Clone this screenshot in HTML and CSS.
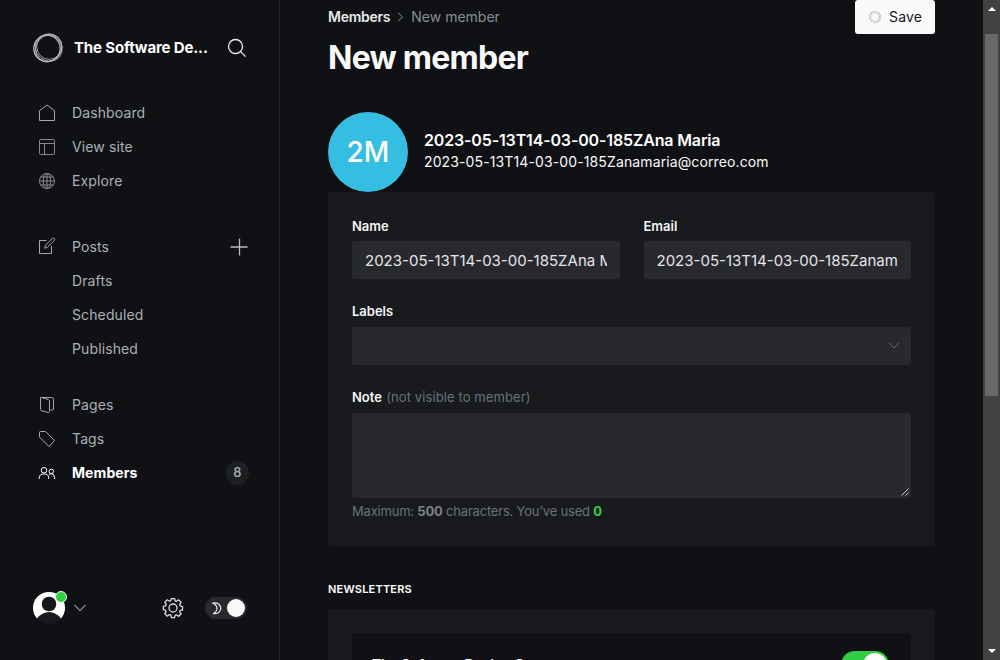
FILE: index.html
```html
<!DOCTYPE html>
<html lang="en">
<head>
<meta charset="utf-8">
<title>New member</title>
<link rel="stylesheet" href="styles.css">
</head>
<body>
<div class="app">
  <aside class="sidebar">
    <header class="site">
      <svg class="logo" width="32" height="32" viewBox="0 0 32 32"><ellipse cx="15" cy="16.500" rx="13.200" ry="13.300" stroke-width="1.300"/><ellipse cx="16.300" cy="16.600" rx="14" ry="12.600" transform="rotate(-50 16 16)" stroke-width=".9"/><ellipse cx="16.500" cy="15.500" rx="14" ry="12.800" transform="rotate(40 16 16)" stroke-width=".8"/><ellipse cx="17.300" cy="14.500" rx="12.600" ry="12.800" stroke-width=".8"/></svg>
      <span class="site-name">The Software De...</span>
      <svg class="search" width="20" height="20" viewBox="0 0 20 20"><circle cx="8.5" cy="8.5" r="7"/><path d="M13.6 13.6l5 5"/></svg>
    </header>
    <nav class="nav">
      <ul class="group">
        <li><svg class="ico" viewBox="0 0 18 18"><path d="M1.5 6.7L9 1l7.5 5.7v9.8h-15z"/></svg><span>Dashboard</span></li>
        <li><svg class="ico dim" viewBox="0 0 18 18"><rect x="1.5" y="1.5" width="15" height="15" rx="1"/><path d="M1.5 5.5h15M6.5 5.5v11"/></svg><span>View site</span></li>
        <li><svg class="ico dim" viewBox="0 0 18 18"><circle cx="9" cy="9" r="7.5"/><ellipse cx="9" cy="9" rx="3.7" ry="7.5"/><path d="M9 1.5v15M1.5 9h15M2.7 5h12.6M2.7 13h12.6"/></svg><span>Explore</span></li>
      </ul>
      <ul class="group posts">
        <li><svg class="ico up1" viewBox="0 0 18 18"><path d="M8.5 3.5h-7v13h12V9M6.7 11.2l.8-3 6.8-6.7q1-1 2 0t0 2L9.5 10.300z"/></svg><span>Posts</span><svg class="plus" width="18" height="18" viewBox="0 0 18 18"><path d="M9.500.5v17M.5 9h17"/></svg></li>
        <li class="sub"><span>Drafts</span></li>
        <li class="sub"><span>Scheduled</span></li>
        <li class="sub"><span>Published</span></li>
      </ul>
      <ul class="group">
        <li><svg class="ico" viewBox="0 0 18 18"><path d="M2.500 1.500h11q2 0 2 2v9.500q0 1-1 1h-2M2.500 1.500v12q0 1 1 1.200l6.700 1.800q1.300.2 1.300-1V5q0-1-1-1.300l-7-2.200"/></svg><span>Pages</span></li>
        <li><svg class="ico" viewBox="0 0 18 18"><path d="M1.500 2.500q0-1 1-1H7.500L16.500 10.500 11 16.500 1.500 7z"/></svg><span>Tags</span></li>
        <li class="active"><svg class="ico" viewBox="0 0 18 18"><circle cx="6" cy="6.300" r="2.800"/><circle cx="13.300" cy="7.400" r="2.200"/><path d="M1.300 15v-1.300Q1.500 10 6 9.900T10.700 13.700V15M11 10.600q1-.9 2.300-.9 3 0 3.400 4V15"/></svg><span>Members</span><span class="count">8</span></li>
      </ul>
    </nav>
    <footer class="foot">
      <div class="user">
        <svg width="32" height="34" viewBox="0 0 32 34"><circle cx="16" cy="17" r="16" fill="#191a1d"/><path d="M4 27.500A16 16 0 1 1 28 27.500Q23 21 16 21T4 27.500z" fill="#fff"/><circle cx="16" cy="13" r="7.300" fill="#15161a"/></svg>
        <span class="online"></span>
      </div>
      <svg class="down" width="12" height="8" viewBox="0 0 12 8"><path d="M.7 1L6 6.700 11.300 1"/></svg>
      <svg class="gear" width="22" height="22" viewBox="0 0 22 22"><circle cx="11" cy="11" r="4"/><path d="M9.400 1.600h3.200l.5 2.300q1.200.7 2.300-.1l1.200-.9 2.500 2.500-1.300 1.900q-.2 1.300 1 1.900l1.700.5v3.200l-2 .4q-1.200.8-.6 2l1.200 1.500-2.400 2.500-1.900-1.300q-1.300-.2-1.900 1l-.3 1.700H9.400L9 18.400q-.9-1.100-2.100-.5l-1.700 1.300-2.400-2.400L4.100 15q.2-1.300-1-1.900l-1.700-.4V9.400L3.500 9q1.100-.8.500-2.100L2.800 5.200l2.400-2.400L7.100 4q1.300.2 1.900-.9z"/></svg>
      <div class="theme"><svg width="10" height="13" viewBox="0 0 10 13"><path d="M1 1.200Q4.200.3 6.800 2.200 9 4.200 8.700 7 8 12 1 11.700 5 9.800 5 6.400T1 1.200z"/></svg><i></i></div>
    </footer>
  </aside>
  <main class="main">
    <header class="head">
      <div>
        <div class="crumbs"><b>Members</b><svg width="7" height="10" viewBox="0 0 7 10"><path d="M1 .8L5.500 5 1 9.200"/></svg><span>New member</span></div>
        <h1>New member</h1>
      </div>
      <button class="save"><svg width="14" height="14" viewBox="0 0 14 14"><circle cx="7" cy="7" r="5"/></svg>Save</button>
    </header>
    <section class="profile">
      <div class="avatar">2M</div>
      <div class="who"><h3>2023-05-13T14-03-00-185ZAna Maria</h3><p>2023-05-13T14-03-00-185Zanamaria@correo.com</p></div>
    </section>
    <section class="panel">
      <div class="cols">
        <div><label>Name</label><div class="input"><span>2023-05-13T14-03-00-185ZAna Maria</span></div></div>
        <div><label>Email</label><div class="input"><span>2023-05-13T14-03-00-185Zanamaria@correo.com</span></div></div>
      </div>
      <label class="l2">Labels</label>
      <div class="input select"><svg width="12" height="8" viewBox="0 0 12 8"><path d="M1 1l5 5 5-5"/></svg></div>
      <label class="l3">Note <span>(not visible to member)</span></label>
      <div class="area"><svg width="8" height="8" viewBox="0 0 8 8"><path d="M.5 7.500l7-7M4.500 7.500l3-3"/></svg></div>
      <p class="hint">Maximum: <b>500</b> characters. You’ve used <b class="ok">0</b></p>
    </section>
    <h4>NEWSLETTERS</h4>
    <section class="panel news"><div class="row"><span class="row-name">The Software Design Co</span><div class="switch"><i></i></div></div></section>
  </main>
  <div class="scroll"><span class="up"></span><div class="thumb"></div><span class="dn"></span></div>
</div>
</body>
</html>
```
FILE: styles.css
```css
* { box-sizing: border-box; }
body { margin: 0; background: #101114; color: #fafafa; font-family: Inter, "Open Sans", sans-serif; }
ul, p, h1, h3, h4 { margin: 0; padding: 0; list-style: none; }
svg { display: block; flex: none; fill: none; stroke: #a4a8ad; stroke-width: 1; }
.app { display: flex; height: 660px; overflow: hidden; }
.sidebar { width: 280px; flex: none; border-right: 1px solid #25262a; display: flex; flex-direction: column; padding: 32px 30px 34px 32px; }
.site { display: flex; align-items: center; height: 32px; }
.logo { stroke: #bdbdbd; }
.site-name { font-size: 15px; font-weight: 700; margin-left: 10px; width: 135px; padding-bottom: 2px; white-space: nowrap; color: #fff; letter-spacing: -.15px; }
.search { margin-left: 18px; stroke: #eee; stroke-width: 1.3; }
.nav { margin-top: 32px; }
.group { margin-bottom: 32px; }
.group.posts { margin-bottom: 22px; }
.group li { height: 34px; display: flex; align-items: center; font-size: 14px; color: #abb0b6; letter-spacing: .12px; padding-left: 6px; }
.group li span { padding-bottom: 1px; }
.ico { width: 18px; height: 18px; margin-right: 16px; }
.ico.dim { stroke: #858a8e; }
.ico.up1 { margin-bottom: 2px; }
.plus { margin-left: auto; margin-right: 1px; stroke: #bbb; stroke-width: 1.3; }
.group .sub { padding-left: 40px; }
.group .active { color: #fff; font-weight: 700; letter-spacing: .08px; }
.active .ico { stroke: #fff; }
.group .count { margin-left: auto; width: 23px; height: 24px; line-height: 23px; text-align: center; background: #1e1f23; border-radius: 12px; font-size: 13px; font-weight: 500; color: #abb0b6; }
.foot { margin-top: auto; height: 36px; display: flex; align-items: center; }
.user { position: relative; margin-left: 1px; }
.user svg { stroke: none; }
.online { position: absolute; right: -2px; top: 0; width: 12px; height: 12px; border: 1px solid #fff; border-radius: 50%; background: #30cf43; }
.down { margin-left: 9px; stroke: #ddd; }
.gear { margin-left: 76px; stroke: #ddd; stroke-width: 1.3; }
.theme { margin-left: 21px; width: 42px; height: 22px; border-radius: 11px; background: #28292c; display: flex; align-items: center; padding: 0 2px 0 7px; justify-content: space-between; flex: none; }
.theme svg { stroke: #eee; stroke-width: 1.2; }
.theme i { width: 18px; height: 18px; border-radius: 50%; background: #fafafa; }
.main { flex: 1; min-width: 0; padding: 0 48px; }
.head { height: 112px; display: flex; justify-content: space-between; align-items: flex-start; }
.crumbs { display: flex; align-items: center; height: 20px; margin-top: 6px; font-size: 14px; color: #8a8e94; }
.crumbs b { font-weight: 600; color: #e8e9eb; letter-spacing: -.25px; }
.crumbs svg { margin: 2px 7px 0; stroke: #8a8e94; }
h1 { font-size: 32px; line-height: 40px; font-weight: 700; letter-spacing: -.75px; margin-top: 12px; }
.save { width: 80px; height: 34px; border: 0; border-radius: 3px; background: #fafafa; color: #15171a; font: 400 14px Inter, sans-serif; letter-spacing: .1px; display: flex; align-items: center; justify-content: center; gap: 7px; padding: 0 0 1px; }
.save svg { stroke: #c2c4c7; stroke-width: 2.600; stroke-dasharray: 1.600 1; }
.profile { display: flex; align-items: center; gap: 16px; height: 80px; }
.avatar { width: 80px; height: 80px; border-radius: 50%; background: #36bde2; color: #fff; display: grid; place-items: center; font-size: 28px; font-weight: 500; }
.who { padding-bottom: 3px; }
h3 { font-size: 16px; line-height: 22px; font-weight: 600; letter-spacing: -.15px; white-space: nowrap; color: #fff; }
.profile p { font-size: 14px; line-height: 21px; letter-spacing: .12px; color: #fafafa; white-space: nowrap; }
.panel { height: 354px; border-radius: 3px; background: #191a1d; padding: 24px; }
.cols { display: grid; grid-template-columns: 1fr 1fr; gap: 24px; }
.cols > div { min-width: 0; }
label { display: block; height: 20px; line-height: 20px; margin-bottom: 5px; font-size: 13px; font-weight: 600; color: #f4f5f6; }
label span { font-weight: 400; color: #6a717a; letter-spacing: .1px; margin-left: 1px; }
.input { height: 38px; border-radius: 3px; background: #28292c; padding: 0 13px; display: flex; align-items: center; font-size: 15px; color: #e5e6e8; }
.input span { overflow: hidden; white-space: nowrap; flex: 1; line-height: 24px; margin-top: 2px; }
.l2 { margin-top: 22px; margin-bottom: 6px; }
.select { justify-content: flex-end; padding-right: 11px; }
.select svg { stroke: #626971; }
.l3 { margin-top: 22px; margin-bottom: 6px; }
.area { height: 85px; border-radius: 3px; background: #28292c; display: flex; align-items: flex-end; justify-content: flex-end; padding: 2px; }
.area svg { stroke: #ccc; }
.hint { margin-top: 3px; font-size: 13px; letter-spacing: -.2px; line-height: 20px; color: #6a717a; }
.hint b { font-weight: 700; color: #7c8087; }
.hint .ok { color: #30cf43; }
h4 { margin-top: 33px; height: 20px; line-height: 20px; font-size: 11px; font-weight: 600; letter-spacing: .2px; color: #fff; }
.news { margin-top: 10px; height: 140px; }
.row { height: 80px; background: #101114; border-radius: 3px; padding: 18px 22px 0 20px; display: flex; justify-content: space-between; }
.row-name { font-size: 14px; font-weight: 600; line-height: 27px; letter-spacing: -.13px; }
.switch { width: 48px; height: 28px; border-radius: 14px; background: #30cf43; display: flex; justify-content: flex-end; padding: 2px; }
.switch i { width: 24px; height: 24px; border-radius: 50%; background: #fff; }
.scroll { width: 17px; flex: none; background: #424242; display: flex; flex-direction: column; align-items: center; }
.up, .dn { border: 4px solid transparent; width: 8px; height: 4px; }
.up { border-bottom-color: #fff; border-top: 0; margin-top: 7px; }
.thumb { width: 13px; height: 362px; margin-top: 23px; background: #686868; }
.dn { border-top-color: #fff; border-bottom: 0; margin-top: auto; margin-bottom: 7px; }
```
